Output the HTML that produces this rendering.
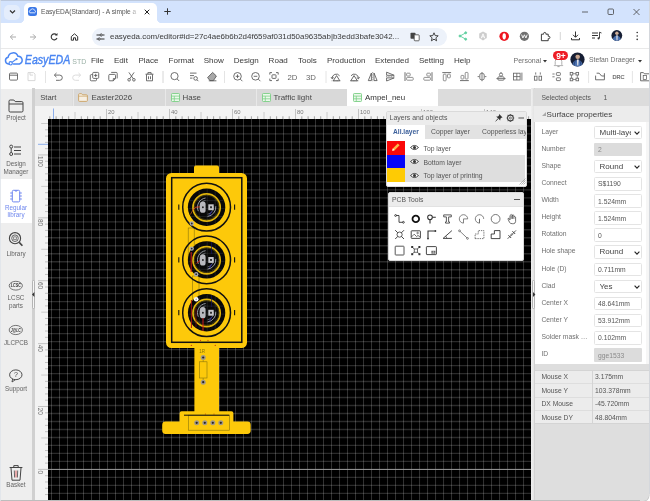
<!DOCTYPE html>
<html><head><meta charset="utf-8"><title>EasyEDA(Standard)</title>
<style>
*{box-sizing:border-box;margin:0;padding:0}
html,body{width:650px;height:501px;overflow:hidden;background:#fff}
body{font-family:"Liberation Sans",Arial,sans-serif;font-size:8px;color:#333;position:relative}
.a{position:absolute}
.t{position:absolute;white-space:nowrap;line-height:1}
#root{position:absolute;left:0;top:0;width:650px;height:501px;will-change:transform}
svg{position:absolute;overflow:visible}
#tabstrip{left:0;top:0;width:650px;height:23px;background:#d3e3fd}
#tab{left:24px;top:3px;width:133px;height:21px;background:#fff;border-radius:5px 5px 0 0}
#toolbar{left:0;top:23px;width:650px;height:26px;background:#fff}
#pill{left:92px;top:27.5px;width:354.500px;height:18.5px;border-radius:9.25px;background:#edf2fa}
#menubar{left:0;top:48.3px;width:650px;height:39.700px;background:#fff;border-top:1px solid #e9e9e9}
#grayrow{left:0;top:88.500px;width:650px;height:18px;background:#dcdcdc}
#sidebar{left:0;top:88.500px;width:32px;height:413px;background:#eeeeee}
#split1{left:32px;top:88px;width:3px;height:413px;background:#d0d0d0}
#rulerT{left:35px;top:106px;width:496px;height:13px;background:#f3f3f3}
#rulerL{left:35px;top:106px;width:13px;height:395px;background:#f3f3f3}
#canvas{left:48px;top:119px;width:483px;height:381px;background:#000}
.mi{top:56.9px;font-size:8.05px;color:#3a3a3a}
.tabx{top:89px;height:17px;font-size:7.95px;color:#484848}
.sbt{left:0;width:32px;text-align:center;font-size:6.3px;color:#606060;white-space:normal;line-height:8px}
</style></head><body>
<div id="root">
<!-- chrome tab strip -->
<div class="a" id="tabstrip"></div>
<div class="a" id="tab"></div>
<div class="a" style="left:157px;top:19px;width:4px;height:4px;background:radial-gradient(circle at 100% 0,#d3e3fd 3.700px,#fff 4.200px)"></div>
<div class="a" style="left:20px;top:19px;width:4px;height:4px;background:radial-gradient(circle at 0 0,#d3e3fd 3.700px,#fff 4.200px)"></div>
<div class="a" id="toolbar"></div>
<div class="a" id="pill"></div>

<!-- CHROME -->
<div class="a" style="left:4px;top:5px;width:16px;height:15px;border-radius:5px;background:#e4edfc"></div>
<svg style="left:9px;top:9px" width="7" height="6" viewBox="0 0 7 6"><path d="M1 1.5 L3.5 4 L6 1.5" fill="none" stroke="#333" stroke-width="1.2"/></svg>
<div class="a" style="left:28px;top:7px;width:9px;height:9px;border-radius:2.5px;background:#3b78e7"></div>
<svg style="left:28px;top:7px" width="9" height="9" viewBox="0 0 9 9"><path d="M2 5.8 a1.4 1.4 0 0 1 .6-2.6 a2 2 0 0 1 3.8 0 a1.4 1.4 0 0 1 .4 2.6 z" fill="none" stroke="#fff" stroke-width=".8"/></svg>
<div class="t" style="left:41px;top:8.6px;font-size:6.6px;color:#555">EasyEDA(Standard) - A simple a</div>
<div class="a" style="left:128px;top:5px;width:12px;height:14px;background:linear-gradient(90deg,rgba(255,255,255,0),#fff)"></div>
<svg style="left:144px;top:8.5px" width="6" height="6" viewBox="0 0 6 6"><path d="M.7 .7 L5.3 5.3 M5.3 .7 L.7 5.3" stroke="#222" stroke-width="1"/></svg>
<svg style="left:164px;top:8px" width="7" height="7" viewBox="0 0 7 7"><path d="M3.5 .3 V6.7 M.3 3.5 H6.7" stroke="#333" stroke-width="1"/></svg>
<!-- window buttons -->
<svg style="left:581px;top:8px" width="60" height="8" viewBox="0 0 60 8"><path d="M1 4 H7" stroke="#444" stroke-width=".8"/><rect x="27" y="1" width="5.5" height="5.5" rx="1" fill="none" stroke="#444" stroke-width=".8"/><path d="M52.5 1 L58.5 7 M58.5 1 L52.5 7" stroke="#444" stroke-width=".8"/></svg>
<!-- nav icons -->
<svg style="left:8px;top:31.6px" width="80" height="10" viewBox="0 0 80 10">
<path d="M8 5 H2.5 M5 2.3 L2.3 5 L5 7.7" fill="none" stroke="#aaa" stroke-width="1"/>
<path d="M22 5 H27.5 M25 2.3 L27.7 5 L25 7.7" fill="none" stroke="#aaa" stroke-width="1"/>
<path d="M48.6 3 A3 3 0 1 0 49 6" fill="none" stroke="#333" stroke-width="1.1"/><path d="M49.5 1 V3.6 H46.9 z" fill="#333"/>
<path d="M63.3 8.2 V4.6 L66.5 1.8 L69.7 4.6 V8.2 H67.5 V5.8 H65.5 V8.2 Z" fill="none" stroke="#333" stroke-width="1"/>
</svg>
<svg style="left:96px;top:32.8px" width="9" height="8" viewBox="0 0 9 8"><path d="M.5 2 H4 M6.5 2 H8.5 M.5 6 H2 M4.5 6 H8.5" stroke="#333" stroke-width="1"/><circle cx="5.2" cy="2" r="1.1" fill="none" stroke="#333" stroke-width=".9"/><circle cx="3.2" cy="6" r="1.1" fill="none" stroke="#333" stroke-width=".9"/></svg>
<div class="t" style="left:110px;top:32.6px;font-size:7.95px;color:#3a3a3a">easyeda.com/editor#id=27c4ae6b6b2d4f659af031d50a9635ab|b3edd3bafe3042...</div>
<!-- translate + star -->
<svg style="left:410px;top:31.8px" width="32" height="10" viewBox="0 0 32 10"><rect x=".5" y=".8" width="5" height="6" rx=".8" fill="#444"/><rect x="4.2" y="2.8" width="5" height="6" rx=".8" fill="#fff" stroke="#444" stroke-width=".8"/><path d="M24 .8 L25.2 3.6 L28.2 3.8 L25.9 5.8 L26.6 8.8 L24 7.2 L21.4 8.8 L22.1 5.8 L19.8 3.8 L22.8 3.6 Z" fill="none" stroke="#333" stroke-width=".9"/></svg>
<!-- extension icons -->
<svg style="left:455px;top:29px" width="190" height="14" viewBox="0 0 190 14">
<g stroke="#5fcf9f" stroke-width=".9" fill="#5fcf9f"><path d="M5 7 L10.5 4 M5 7 L10.5 10" fill="none"/><circle cx="5" cy="7" r="1"/><circle cx="10.7" cy="3.8" r="1"/><circle cx="10.7" cy="10.2" r="1"/></g>
<path d="M28 2.600 L31.800 4.600 V9 L28 11.400 L24.200 9 V4.600 Z" fill="#cdcdcd"/><path d="M26.200 9.300 L28 4.800 L29.800 9.300 M26.900 7.800 H29.100" stroke="#fff" fill="none" stroke-width=".9"/>
<ellipse cx="49.200" cy="7.300" rx="4.800" ry="4.600" fill="#ee1620"/><ellipse cx="49.200" cy="7.300" rx="1.700" ry="3.100" fill="#fff"/>
<circle cx="69.400" cy="7.300" r="4.600" fill="#707070"/><path d="M66.600 5.600 L67.900 9 L69.400 5.800 L70.900 9 L72.200 5.600" fill="none" stroke="#fff" stroke-width=".9"/>
<path d="M86.400 5.200 H88.600 V4.600 A1.150 1.150 0 0 1 90.900 4.600 V5.200 H93.200 V7.300 H93.800 A1.150 1.150 0 0 1 93.800 9.600 H93.200 V11.700 H86.400 Z" fill="none" stroke="#333" stroke-width=".95" stroke-linejoin="round"/>
<path d="M105.3 3 V11" stroke="#ccc" stroke-width=".8"/>
<path d="M120.5 2.5 V8 M118 5.8 L120.5 8.3 L123 5.8 M116.5 9 V10.8 H124.5 V9" fill="none" stroke="#333" stroke-width="1"/>
<path d="M137 4 H143 M137 6.5 H143 M137 9 H140" stroke="#333" stroke-width="1"/><path d="M144.5 3.2 V9 M144.5 3.2 L146.5 4" stroke="#333" stroke-width=".9" fill="none"/><circle cx="143.6" cy="9.3" r="1.1" fill="#333"/>
<defs><clipPath id="av2"><circle cx="161.800" cy="6.500" r="5.400"/></clipPath></defs><circle cx="161.800" cy="6.500" r="5.400" fill="#161e34"/><g clip-path="url(#av2)"><path d="M157.600 12 Q158 6.800 161.800 6.600 Q165.600 6.800 166 12 Z" fill="#4a70ae"/><circle cx="161.900" cy="4.300" r="1.700" fill="#cfae98"/><path d="M161.300 6.200 H162.700 L162.500 11.500 H161.500 Z" fill="#e6e2e4"/></g>
<circle cx="182.200" cy="3.500" r=".8" fill="#333"/><circle cx="182.200" cy="7" r=".8" fill="#333"/><circle cx="182.200" cy="10.400" r=".8" fill="#333"/>
</svg>
<div class="a" id="menubar"></div>

<!-- MENU -->
<svg style="left:4px;top:51px" width="84" height="17" viewBox="0 0 84 17">
<g transform="translate(-0.6,-0.9) scale(1.1)"><path d="M5.2 12.6 H4.6 A3.1 3.1 0 0 1 4.3 6.5 A4.6 4.6 0 0 1 13.2 5.6 A3.6 3.6 0 0 1 14.6 12.6 H9.2" fill="none" stroke="#4a86f2" stroke-width="1.35" stroke-linecap="round"/>
<circle cx="6.6" cy="12" r="1.5" fill="none" stroke="#4a86f2" stroke-width="1"/><path d="M7.8 11.2 L11.3 8.6" stroke="#4a86f2" stroke-width="1"/><circle cx="12" cy="8.2" r="1" fill="#4a86f2"/></g>
<text x="20.8" y="13.200" font-family="Liberation Sans,Arial,sans-serif" font-style="italic" font-size="12.2" fill="#4a86f2" stroke="#4a86f2" stroke-width=".4" textLength="45.500" lengthAdjust="spacingAndGlyphs">EasyEDA</text>
<text x="68.3" y="12.500" font-family="Liberation Sans,Arial,sans-serif" font-size="6.5" fill="#9ab0a6" textLength="14" lengthAdjust="spacingAndGlyphs">STD</text>
</svg>
<div class="t mi" style="left:91px;width:13.0px">File</div>
<div class="t mi" style="left:114px;width:14.0px">Edit</div>
<div class="t mi" style="left:138.4px;width:19.4px">Place</div>
<div class="t mi" style="left:168.5px;width:25.2px">Format</div>
<div class="t mi" style="left:203.7px;width:20.3px">Show</div>
<div class="t mi" style="left:233.7px;width:25.3px">Design</div>
<div class="t mi" style="left:268.6px;width:19.0px">Road</div>
<div class="t mi" style="left:298px;width:19.0px">Tools</div>
<div class="t mi" style="left:327px;width:38.0px">Production</div>
<div class="t mi" style="left:375px;width:34.0px">Extended</div>
<div class="t mi" style="left:419px;width:25.0px">Setting</div>
<div class="t mi" style="left:454px;width:16.0px">Help</div>
<div class="t" style="left:513.5px;top:56.7px;font-size:7px;color:#6e6e6e">Personal</div>
<svg style="left:543.300px;top:59.6px" width="4" height="2.400" viewBox="0 0 5 3"><path d="M0 0 H5 L2.5 3 Z" fill="#333"/></svg>
<svg style="left:553px;top:55.6px" width="11" height="12" viewBox="0 0 11 12"><path d="M2.2 8.5 V5.5 A3.3 3.3 0 0 1 8.8 5.5 V8.5 L9.8 9.6 H1.2 Z" fill="none" stroke="#a8a8a8" stroke-width=".9"/><path d="M4.4 10.6 H6.6" stroke="#999" stroke-width=".9"/></svg>
<div class="a" style="left:552.5px;top:51.3px;width:15px;height:9px;border-radius:4.5px;background:#ee1c25"></div>
<div class="t" style="left:556.2px;top:51.7px;font-size:8.4px;font-weight:bold;color:#fff">9+</div>
<svg style="left:570px;top:51.6px" width="15" height="15" viewBox="0 0 15 15"><defs><clipPath id="av"><circle cx="7.5" cy="7.5" r="7"/></clipPath></defs><circle cx="7.5" cy="7.5" r="7.100" fill="#161e34"/><g clip-path="url(#av)"><path d="M2 15 Q2.400 8.200 7.500 8 Q12.600 8.200 13 15 Z" fill="#4a70ae"/><path d="M5.200 8.600 L3.600 14 M9.800 8.600 L11.400 14" stroke="#2d4a80" stroke-width="1.200"/><circle cx="7.700" cy="4.700" r="2.300" fill="#c8a690"/><path d="M5.500 3.800 Q7.700 1.200 9.900 3.800 L9.700 2.600 Q7.700 .8 5.700 2.600 Z" fill="#2a2a2a"/><path d="M6.900 7.400 H8.700 L8.300 13.500 H7.300 Z" fill="#e4e4ea"/></g></svg>
<div class="t" style="left:589px;top:56.7px;font-size:6.8px;color:#6e6e6e">Stefan Draeger</div>
<svg style="left:638.300px;top:59.6px" width="4" height="2.400" viewBox="0 0 5 3"><path d="M0 0 H5 L2.5 3 Z" fill="#333"/></svg>
<svg style="left:0;top:67.6px" width="650" height="19" viewBox="0 0 650 19">
<g transform="translate(13.5,8.6)" fill="none" stroke="#555" stroke-width=".85"><rect x="-4" y="-3.5" width="8" height="7" rx="1"/><path d="M-4 -1.4 H4"/></g>
<g transform="translate(31.5,8.6)" fill="none" stroke="#d4d4d4" stroke-width=".9"><path d="M-3.5 -4 H2 L3.5 -2.5 V4 H-3.5 Z"/><path d="M-1.5 -4 V-1.5 H1.5"/></g>
<path d="M45.5 3 V15" stroke="#ddd" stroke-width=".8"/><g transform="translate(58.5,8.6)" fill="none" stroke="#555" stroke-width=".85"><path d="M-3.8 -1.5 H1.2 A2.6 2.6 0 0 1 1.2 3.7 H-2.5"/><path d="M-2 -3.6 L-4.2 -1.5 L-2 .6"/></g>
<g transform="translate(76.5,8.6)" fill="none" stroke="#d8d8d8" stroke-width=".9"><path d="M3.8 -1.5 H-1.2 A2.6 2.6 0 0 0 -1.2 3.7 H2.5"/><path d="M2 -3.6 L4.2 -1.5 L2 .6"/></g>
<g transform="translate(94.5,8.6)" fill="none" stroke="#555" stroke-width=".85"><rect x="-1.8" y="-4.2" width="6" height="6" rx="1"/><path d="M-2 -2 H-3.2 A1 1 0 0 0 -4.2 -1 V3.2 A1 1 0 0 0 -3.2 4.2 H1 A1 1 0 0 0 2 3.2 V2"/><path d="M1.2 -2.8 V.4 M-.4 -1.2 H2.8"/></g>
<g transform="translate(113,8.6)" fill="none" stroke="#555" stroke-width=".85"><path d="M-1.8 -4.2 H3.2 A1 1 0 0 1 4.2 -3.2 V1.8"/><path d="M-4.2 -1.2 A1 1 0 0 1 -3.2 -2.2 H1.5 A1 1 0 0 1 2.5 -1.2 V2 L.3 4.2 H-3.2 A1 1 0 0 1 -4.2 3.2 Z"/><path d="M2.4 2 H.3 V4.2" /></g>
<g transform="translate(131.5,8.6)" fill="none" stroke="#555" stroke-width=".85"><path d="M-2.6 -4.2 L1.8 2.2 M2.6 -4.2 L-1.8 2.2"/><circle cx="-2.4" cy="3.2" r="1.3"/><circle cx="2.4" cy="3.2" r="1.3"/></g>
<g transform="translate(149.5,8.6)" fill="none" stroke="#555" stroke-width=".85"><path d="M-4 -2.4 H4 M-1.6 -2.4 V-4 H1.6 V-2.4"/><path d="M-3 -2.2 V4.2 H3 V-2.2"/><path d="M-1 -.3 V2.6 M1 -.3 V2.6"/></g>
<path d="M163 3 V15" stroke="#ccc" stroke-width=".8"/><g transform="translate(175,8.6)" fill="none" stroke="#555" stroke-width=".85"><circle cx="-.5" cy="-.5" r="3.6"/><path d="M2.2 2.4 L4.2 4.4"/></g>
<g transform="translate(194,8.6)" fill="none" stroke="#555" stroke-width=".85"><path d="M-4 -3.5 H2.5 M-4 -1 H0 M-4 1.5 H-1.5"/><circle cx="1.6" cy="1.8" r="1.8"/><path d="M3 3.2 L4.4 4.6"/></g>
<g transform="translate(212,8.6)" fill="none" stroke="#555" stroke-width=".85"><path d="M-4.4 1 L.6 -4.2 L4.4 -.6 L1.4 4 H-2 Z" fill="#a8a8a8"/><path d="M-3.2 4.2 H4.4"/></g>
<path d="M224.5 3 V15" stroke="#ddd" stroke-width=".8"/><g transform="translate(238,8.6)" fill="none" stroke="#555" stroke-width=".85"><circle cx="-.5" cy="-.3" r="3.8"/><path d="M2.4 2.6 L4.4 4.6 M-2.3 -.3 H1.3 M-.5 -2.1 V1.5"/></g>
<g transform="translate(256,8.6)" fill="none" stroke="#555" stroke-width=".85"><circle cx="-.5" cy="-.3" r="3.8"/><path d="M2.4 2.6 L4.4 4.6 M-2.3 -.3 H1.3"/></g>
<g transform="translate(274,8.6)" fill="none" stroke="#555" stroke-width=".85"><path d="M-4.2 -2 V-4 H-2 M2 -4 H4.2 V-2 M4.2 2 V4 H2 M-2 4 H-4.2 V2"/><rect x="-2" y="-1.8" width="4" height="3.6" rx=".6"/></g>
<text x="287.5" y="11.6" font-family="Liberation Sans,Arial,sans-serif" font-size="7.8" fill="#666">2D</text><text x="306" y="11.6" font-family="Liberation Sans,Arial,sans-serif" font-size="7.8" fill="#666">3D</text><path d="M326 3 V15" stroke="#ddd" stroke-width=".8"/><g transform="translate(336,8.6)" fill="none" stroke="#555" stroke-width=".85"><path d="M-2.800 4.200 L.6 -1 L3.800 4.200 Z" stroke-width=".9"/><path d="M-3.800 2 A4.100 4.100 0 0 1 3.600 -.8" stroke-width=".85"/><path d="M-5 .4 L-3.800 2.300 L-2.200 .9" stroke-width=".8"/><path d="M-4.400 4.200H4.400" stroke-width=".6" stroke-dasharray=".8 .6"/></g>
<g transform="translate(354.6,8.6)" fill="none" stroke="#555" stroke-width=".85"><path d="M2.800 4.200 L-.6 -1 L-3.800 4.200 Z" stroke-width=".9"/><path d="M3.800 2 A4.100 4.100 0 0 0 -3.600 -.8" stroke-width=".85"/><path d="M5 .4 L3.800 2.300 L2.200 .9" stroke-width=".8"/><path d="M-4.400 4.200H4.400" stroke-width=".6" stroke-dasharray=".8 .6"/></g>
<g transform="translate(372.7,8.6)" fill="none" stroke="#555" stroke-width=".85"><path d="M0 -4.600 V4.600" stroke-width=".6" stroke-dasharray="1 .7"/><path d="M-1.300 -3.600 V4 H-4.400 Z M1.300 -3.600 V4 H4.400 Z" stroke-width=".85"/></g>
<g transform="translate(390.4,8.6)" fill="none" stroke="#555" stroke-width=".85"><path d="M-4.400 0 H4.600" stroke-width=".6" stroke-dasharray="1 .7"/><path d="M-3.800 -1.300 H3.800 L-3.800 -4.400 Z M-3.800 1.300 H3.800 L-3.800 4.400 Z" stroke-width=".85"/></g>
<g transform="translate(409,8.6)" fill="none" stroke="#555" stroke-width=".85"><path d="M-4 -4.4 V4.4"/><rect stroke="#808080" rx=".7" x="-2.4" y="-3.4" width="3.6" height="2.8"/><rect stroke="#808080" rx=".7" x="-2.4" y=".8" width="6.6" height="2.8"/></g>
<g transform="translate(428,8.6)" fill="none" stroke="#555" stroke-width=".85"><path d="M4 -4.4 V4.4"/><rect stroke="#808080" rx=".7" x="-1.2" y="-3.4" width="3.6" height="2.8"/><rect stroke="#808080" rx=".7" x="-4.2" y=".8" width="6.6" height="2.8"/></g>
<g transform="translate(446.7,8.6)" fill="none" stroke="#555" stroke-width=".85"><path d="M-4.4 -4 H4.4"/><rect stroke="#808080" rx=".7" x="-3.4" y="-2.4" width="2.8" height="6.6"/><rect stroke="#808080" rx=".7" x=".8" y="-2.4" width="2.8" height="3.6"/></g>
<g transform="translate(464.4,8.6)" fill="none" stroke="#555" stroke-width=".85"><path d="M-4.4 4 H4.4"/><rect stroke="#808080" rx=".7" x="-3.4" y="-1.2" width="2.8" height="3.6"/><rect stroke="#808080" rx=".7" x=".8" y="-4.2" width="2.8" height="6.6"/></g>
<g transform="translate(482,8.6)" fill="none" stroke="#666" stroke-width=".85"><path d="M0 -4.6 V4.6 M-4.4 0 H-2.6 M2.6 0 H4.4"/><rect x="-2.2" y="-3.2" width="4.4" height="6.4" rx="1.6"/></g>
<g transform="translate(501,8.6)" fill="none" stroke="#666" stroke-width=".85"><path d="M-4.6 2 H4.6 M0 -4.4 V-3 "/><rect x="-3.2" y=".2" width="6.4" height="3.4" rx="1.2"/><circle cx="0" cy="-2" r="1.6"/></g>
<g transform="translate(517.7,8.6)" fill="none" stroke="#666" stroke-width=".85"><rect x="-4.2" y="-3.4" width="6.6" height="6.8"/><path d="M-4.2 0 H2.4 M-.9 -3.4 V3.4 M4.2 -4 V4"/></g>
<g transform="translate(538,8.6)" fill="none" stroke="#666" stroke-width=".85"><rect x="-3.6" y="-.4" width="2.6" height="4"/><rect x="1" y="-.4" width="2.6" height="4"/><path d="M-2.3 -4.2 V-2 M2.3 -4.2 V-2"/></g>
<g transform="translate(556.6,8.6)" fill="none" stroke="#666" stroke-width=".85"><rect x="-.2" y="-4" width="4" height="2.8" rx=".6"/><rect x="-.2" y="1.2" width="4" height="2.8" rx=".6"/><path d="M-4.2 -2.6 H-2 M-4.2 .2 H-2"/></g>
<g transform="translate(574.4,8.6)" fill="none" stroke="#666" stroke-width=".85"><rect x="-4.2" y="-4.2" width="2.6" height="2.6"/><rect x="1.6" y="-4.2" width="2.6" height="2.6"/><rect x="-4.2" y="1.6" width="2.6" height="2.6"/><rect x="1.6" y="1.6" width="2.6" height="2.6"/><path d="M-1.6 -2.9 H1.6 M-1.6 2.9 H1.6 M-2.9 -1.6 V1.6 M2.9 -1.6 V1.6" stroke-width=".7"/></g>
<path d="M588.6 3 V15" stroke="#ddd" stroke-width=".8"/><g transform="translate(600,8.6)" fill="none" stroke="#555" stroke-width=".85"><path d="M-4.4 -1 V3.2 H4.4 V-3.4 M-3.4 -3.4 H-.8 L1.6 -.6 H4.4"/></g>
<text x="612.4" y="10.8" font-family="Liberation Sans,Arial,sans-serif" font-size="5.8" fill="#666" stroke="#666" stroke-width=".2" textLength="12" lengthAdjust="spacingAndGlyphs">DRC</text><path d="M632.4 3 V15" stroke="#ddd" stroke-width=".8"/><g transform="translate(645,8.6)" fill="none" stroke="#555" stroke-width=".85"><path d="M-4.4 -4 H-1.6 L-.6 -2.8 H5 V4.2 H-4.4 Z"/><rect x="-1.8" y="-1.2" width="3.4" height="4" stroke-width=".7"/></g>
</svg>
<div class="a" id="grayrow"></div>
<div class="a" id="sidebar"></div>
<div class="a" id="split1"></div>
<div class="a" id="rulerT"></div>
<div class="a" id="rulerL"></div>
<div class="a" id="canvas"></div>

<!-- TABS -->
<div class="a" style="left:35px;top:89px;width:37px;height:17px;background:#e0e0e0"></div>
<div class="a" style="left:72.5px;top:89px;width:92px;height:17px;background:#d9d9d9;border-left:1px solid #e8e8e8"></div>
<div class="a" style="left:164.5px;top:89px;width:91px;height:17px;background:#d9d9d9;border-left:1px solid #e8e8e8"></div>
<div class="a" style="left:255.5px;top:89px;width:91px;height:17px;background:#d9d9d9;border-left:1px solid #e8e8e8"></div>
<div class="a" style="left:347px;top:89px;width:91px;height:17px;background:#fff"></div>
<div class="t tabx" style="left:40.2px;top:93.7px;font-size:7.7px">Start</div>
<svg style="left:78px;top:93px" width="10" height="9" viewBox="0 0 10 9"><path d="M.6 1.6 A.9 .9 0 0 1 1.5 .7 H3.6 L4.5 1.8 H8.5 A.9 .9 0 0 1 9.4 2.700 V7.5 A.9 .9 0 0 1 8.5 8.4 H1.5 A.9 .9 0 0 1 .6 7.5 Z" fill="#f7efe2" stroke="#c9a063" stroke-width=".9"/><path d="M.6 3.2H9.400" stroke="#c9a063" stroke-width=".7"/></svg>
<div class="t tabx" style="left:91.5px;top:93.5px">Easter2026</div>
<svg style="left:171px;top:93px" width="9" height="9" viewBox="0 0 9 9"><rect x=".5" y=".5" width="8" height="8" rx=".8" fill="#ecf9ec" stroke="#7ccf86" stroke-width=".9"/><path d="M.5 3.100H8.5 M.5 5.800H8.5 M3.3 3.100V8.5" stroke="#7ccf86" stroke-width=".8"/></svg>
<div class="t tabx" style="left:182.5px;top:93.5px">Hase</div>
<svg style="left:262px;top:93px" width="9" height="9" viewBox="0 0 9 9"><rect x=".5" y=".5" width="8" height="8" rx=".8" fill="#ecf9ec" stroke="#7ccf86" stroke-width=".9"/><path d="M.5 3.100H8.5 M.5 5.800H8.5 M3.3 3.100V8.5" stroke="#7ccf86" stroke-width=".8"/></svg>
<div class="t tabx" style="left:273.5px;top:93.5px">Traffic light</div>
<svg style="left:353px;top:93px" width="9" height="9" viewBox="0 0 9 9"><rect x=".5" y=".5" width="8" height="8" rx=".8" fill="#ecf9ec" stroke="#7ccf86" stroke-width=".9"/><path d="M.5 3.100H8.5 M.5 5.800H8.5 M3.3 3.100V8.5" stroke="#7ccf86" stroke-width=".8"/></svg>
<div class="t tabx" style="left:365px;top:93.5px;color:#333">Ampel_neu</div>
<!-- SIDEBAR -->
<div class="a" style="left:32px;top:280.300px;width:3.200px;height:29px;background:#f6f6f6;border:.6px solid #b4b4b4;border-radius:1.200px;z-index:3"></div>
<svg style="left:32.4px;top:292px;z-index:4" width="2.400" height="5" viewBox="0 0 2.400 5"><path d="M2.400 0L0 2.500L2.400 5Z" fill="#333"/></svg>
<div class="a" style="left:0;top:178.800px;width:31.500px;height:44.400px;background:#fff"></div>
<svg style="left:0;top:88px" width="32" height="413" viewBox="0 88 32 413" fill="none" stroke="#444" stroke-width="1">
<path d="M9 101.200 A1.200 1.200 0 0 1 10.200 100 H13.800 L15.200 101.600 H21.800 A1.200 1.200 0 0 1 23 102.800 V110.800 A1.200 1.200 0 0 1 21.800 112 H10.200 A1.200 1.200 0 0 1 9 110.800 Z M9 104 H23"/>
<path d="M14 147H21 M14 150.500H21 M14 154H21" stroke-width="1.100"/><circle cx="11.200" cy="146.600" r="1.500"/><circle cx="11.200" cy="154" r="1.500"/><path d="M11.200 148.100V152.500"/>
<g stroke="#6f86f0"><rect x="12.300" y="190.300" width="7.400" height="11.600" rx="1.200"/><path d="M10.200 193H12.300 M10.200 196H12.300 M10.200 199H12.300 M19.700 193H21.800 M19.700 196H21.800 M19.700 199H21.800 M15 190.300 A1 1 0 0 0 17 190.300"/></g>
<circle cx="15" cy="238.200" r="5.600" stroke-width="1.100"/><circle cx="15" cy="238.200" r="3.300" stroke-width=".8"/><path d="M19.200 242.400 L22.400 245.800" stroke-width="1.600"/><path d="M13.600 236.800H16.400V239.600H13.600Z" stroke-width=".6"/>
<ellipse cx="15.800" cy="285.700" rx="6.600" ry="4.400" stroke-width=".8" stroke="#555"/>
<ellipse cx="15.800" cy="330" rx="6.600" ry="4.600" stroke-width=".8" stroke="#555"/>
<ellipse cx="15.800" cy="374.800" rx="6.200" ry="4.900" stroke-width=".95"/><path d="M12.600 379 L12 382 L15.400 379.700" stroke-width=".9"/>
<path d="M9.600 467.500H22.400 M13.800 467.300 V465.600 H18.200 V467.300 M11 468 L12 480.200 H20 L21 468" /><path d="M14.300 470.500 L14.600 477.500 M17.700 470.500 L17.400 477.500" stroke-width=".8"/><path d="M16 470.500V477.500" stroke="#d44" stroke-width=".8"/>
</svg>
<svg style="left:0;top:280px" width="32" height="56" viewBox="0 280 32 56" font-family="Liberation Sans,Arial,sans-serif" font-weight="bold" font-style="italic" fill="#333"><text x="15.800" y="287.300" font-size="4.500" text-anchor="middle" textLength="10" lengthAdjust="spacingAndGlyphs">LCSC</text><text x="15.800" y="331.600" font-size="4.500" text-anchor="middle" textLength="10" lengthAdjust="spacingAndGlyphs">J@LC</text></svg>
<div class="t" style="left:14px;top:371.300px;font-size:7px;color:#444">?</div>
<div class="t sbt" style="top:114.2px;color:#636363">Project</div>
<div class="t sbt" style="top:160px;color:#636363">Design<br>Manager</div>
<div class="t sbt" style="top:204px;color:#7088ee;line-height:7.200px">Regular<br>library</div>
<div class="t sbt" style="top:249.9px;color:#636363">Library</div>
<div class="t sbt" style="top:294px;color:#636363">LCSC<br>parts</div>
<div class="t sbt" style="top:339px;color:#636363">JLCPCB</div>
<div class="t sbt" style="top:384.6px;color:#636363">Support</div>
<div class="t sbt" style="top:481px;color:#636363">Basket</div>
<svg id="rulers" style="left:0;top:0" width="650" height="501" viewBox="0 0 650 501" font-family="Liberation Sans,Arial,sans-serif">
<text x="108.1" y="114" font-size="5.9" fill="#7a7a7a">20</text>
<text x="171.1" y="114" font-size="5.9" fill="#7a7a7a">40</text>
<text x="234.1" y="114" font-size="5.9" fill="#7a7a7a">60</text>
<text x="297.1" y="114" font-size="5.9" fill="#7a7a7a">80</text>
<text x="360.1" y="114" font-size="5.9" fill="#7a7a7a">100</text>
<text x="423.1" y="114" font-size="5.9" fill="#7a7a7a">120</text>
<text x="486.1" y="114" font-size="5.9" fill="#7a7a7a">140</text>
<path d="M49.80 116.3V119M56.10 116.3V119M62.40 116.3V119M68.70 116.3V119M81.30 116.3V119M87.60 116.3V119M93.90 116.3V119M100.20 116.3V119M112.80 116.3V119M119.10 116.3V119M125.40 116.3V119M131.70 116.3V119M144.30 116.3V119M150.60 116.3V119M156.90 116.3V119M163.20 116.3V119M175.80 116.3V119M182.10 116.3V119M188.40 116.3V119M194.70 116.3V119M207.30 116.3V119M213.60 116.3V119M219.90 116.3V119M226.20 116.3V119M238.80 116.3V119M245.10 116.3V119M251.40 116.3V119M257.70 116.3V119M270.30 116.3V119M276.60 116.3V119M282.90 116.3V119M289.20 116.3V119M301.80 116.3V119M308.10 116.3V119M314.40 116.3V119M320.70 116.3V119M333.30 116.3V119M339.60 116.3V119M345.90 116.3V119M352.20 116.3V119M364.80 116.3V119M371.10 116.3V119M377.40 116.3V119M383.70 116.3V119M396.30 116.3V119M402.60 116.3V119M408.90 116.3V119M415.20 116.3V119M427.80 116.3V119M434.10 116.3V119M440.40 116.3V119M446.70 116.3V119M459.30 116.3V119M465.60 116.3V119M471.90 116.3V119M478.20 116.3V119M490.80 116.3V119M497.10 116.3V119M503.40 116.3V119M509.70 116.3V119M522.30 116.3V119M528.60 116.3V119" stroke="#8c8c8c" stroke-width=".8"/><path d="M75.00 112V119M138.00 112V119M201.00 112V119M264.00 112V119M327.00 112V119M390.00 112V119M453.00 112V119M516.00 112V119" stroke="#c6c6c6" stroke-width=".9"/><path d="M106.50 109V119M169.50 109V119M232.50 109V119M295.50 109V119M358.50 109V119M421.50 109V119M484.50 109V119" stroke="#bdbdbd" stroke-width=".9"/>
<text transform="translate(38.4,470.6) rotate(90)" font-size="6.4" fill="#707070">0</text>
<text transform="translate(38.4,407.7) rotate(90)" font-size="6.4" fill="#707070">20</text>
<text transform="translate(38.4,344.8) rotate(90)" font-size="6.4" fill="#707070">40</text>
<text transform="translate(38.4,281.9) rotate(90)" font-size="6.4" fill="#707070">60</text>
<text transform="translate(38.4,219.0) rotate(90)" font-size="6.4" fill="#707070">80</text>
<text transform="translate(38.4,156.1) rotate(90)" font-size="6.4" fill="#707070">100</text>
<path d="M45 494.56H48M45 488.27H48M45 481.98H48M45 475.69H48M45 463.11H48M45 456.82H48M45 450.53H48M45 444.24H48M45 431.67H48M45 425.38H48M45 419.09H48M45 412.80H48M45 400.22H48M45 393.93H48M45 387.64H48M45 381.35H48M45 368.78H48M45 362.49H48M45 356.20H48M45 349.91H48M45 337.33H48M45 331.04H48M45 324.75H48M45 318.46H48M45 305.89H48M45 299.60H48M45 293.31H48M45 287.02H48M45 274.44H48M45 268.15H48M45 261.86H48M45 255.57H48M45 243.00H48M45 236.71H48M45 230.42H48M45 224.13H48M45 211.55H48M45 205.26H48M45 198.97H48M45 192.68H48M45 180.11H48M45 173.82H48M45 167.53H48M45 161.24H48M45 148.66H48M45 142.37H48M45 136.08H48M45 129.79H48" stroke="#b4b4b4" stroke-width=".8"/><path d="M41.2 437.95H48M41.2 375.06H48M41.2 312.17H48M41.2 249.28H48M41.2 186.39H48M41.2 123.50H48" stroke="#c6c6c6" stroke-width=".9"/><path d="M38 469.40H48M38 406.51H48M38 343.62H48M38 280.73H48M38 217.84H48M38 154.95H48" stroke="#bdbdbd" stroke-width=".9"/>
<path d="M53.5 108.5V119 M38 144.3H48" stroke="#7aa2ea" stroke-width=".85"/>
</svg>
<svg id="cv" style="left:48px;top:119px;overflow:hidden" width="483" height="381" viewBox="48 119 483 381" font-family="Liberation Sans,Arial,sans-serif">
<path id="gv" d="M51.50 119V500M59.50 119V500M67.50 119V500M75.50 119V500M83.50 119V500M91.51 119V500M99.51 119V500M107.51 119V500M115.51 119V500M123.51 119V500M131.51 119V500M139.51 119V500M147.51 119V500M155.51 119V500M163.51 119V500M171.52 119V500M179.52 119V500M187.52 119V500M195.52 119V500M203.52 119V500M211.52 119V500M219.52 119V500M227.52 119V500M235.52 119V500M243.52 119V500M251.53 119V500M259.53 119V500M267.53 119V500M275.53 119V500M283.53 119V500M291.53 119V500M299.53 119V500M307.53 119V500M315.53 119V500M323.53 119V500M331.54 119V500M339.54 119V500M347.54 119V500M355.54 119V500M363.54 119V500M371.54 119V500M379.54 119V500M387.54 119V500M395.54 119V500M403.54 119V500M411.55 119V500M419.55 119V500M427.55 119V500M435.55 119V500M443.55 119V500M451.55 119V500M459.55 119V500M467.55 119V500M475.55 119V500M483.55 119V500M491.56 119V500M499.56 119V500M507.56 119V500M515.56 119V500M523.56 119V500" stroke="#fff" stroke-opacity=".21" stroke-width=".95"/>
<path id="gh" d="M48 493.36H531M48 485.37H531M48 477.39H531M48 461.41H531M48 453.43H531M48 445.44H531M48 437.45H531M48 429.46H531M48 421.48H531M48 413.49H531M48 405.50H531M48 397.52H531M48 389.53H531M48 381.54H531M48 373.56H531M48 365.57H531M48 357.58H531M48 349.59H531M48 341.61H531M48 333.62H531M48 325.63H531M48 317.65H531M48 309.66H531M48 301.67H531M48 293.69H531M48 285.70H531M48 277.71H531M48 269.72H531M48 261.74H531M48 253.75H531M48 245.76H531M48 237.78H531M48 229.79H531M48 221.80H531M48 213.82H531M48 205.83H531M48 197.84H531M48 189.85H531M48 181.87H531M48 173.88H531M48 165.89H531M48 157.91H531M48 149.92H531M48 141.93H531M48 133.94H531M48 125.96H531" stroke="#fff" stroke-opacity=".17" stroke-width="1.35"/>
<path id="go" d="M48 469.4H531" stroke="#a0a0a0" stroke-width="1"/>
<path d="M196 165.4H217A2 2 0 0 1 219 167.4V173H241.5A5.5 5.5 0 0 1 247 178.500V342.5A5.500 5.500 0 0 1 241.5 348H219V411.2H231.400A2 2 0 0 1 233.4 413.200V421.600H247.300A3.400 3.400 0 0 1 250.7 425V430.500A3.400 3.400 0 0 1 247.300 433.900H165.600A3.400 3.400 0 0 1 162.200 430.500V425A3.400 3.400 0 0 1 165.600 421.600H179.600V413.200A2 2 0 0 1 181.600 411.200H194.400V348H171.500A5.500 5.500 0 0 1 166 342.500V178.500A5.500 5.500 0 0 1 171.500 173H194V167.400A2 2 0 0 1 196 165.400Z" fill="#fdc90a"/>
<rect x="171.7" y="177.700" width="70.100" height="164.600" fill="none" stroke="#111" stroke-width="1.5"/>
<g fill="none" stroke="#8a760c" stroke-width=".6"><rect x="188.2" y="228" width="6" height="36"/><rect x="192.6" y="276" width="6.4" height="24"/><rect x="199.6" y="361.8" width="7.4" height="16.2"/><path d="M203.200 360V361.800 M203.200 378V380"/><rect x="188.4" y="415.2" width="40.9" height="15"/></g>
<circle cx="206.6" cy="207.2" r="23.9" fill="none" stroke="#111" stroke-width="1.5"/><circle cx="206.6" cy="207.2" r="18.7" fill="#080808"/><path d="M199.2 191.2V223.2 M207.2 189.2V225.2 M215.2 191.2V223.2 M189.6 200.6H223.6 M188.6 208.6H224.6 M190.6 216.6H222.6" stroke="#fff" stroke-opacity=".1" stroke-width=".9"/><circle cx="206.6" cy="207.5" r="13.6" fill="none" stroke="#e0b50c" stroke-width="1.7"/><circle cx="206.6" cy="207.5" r="12.3" fill="none" stroke="#6b5a10" stroke-width=".6"/><path d="M198.3 211.2 A9.4 9.4 0 0 1 205.6 198.0" fill="none" stroke="#a4a8b0" stroke-width=".9"/><path d="M215.8 206.2 A9.4 9.4 0 0 1 207.6 216.4" fill="none" stroke="#a4a8b0" stroke-width=".9"/><path d="M213.6 206.2 A7 7 0 0 1 207.6 214.2" fill="none" stroke="#7d828a" stroke-width=".7"/><path d="M200.4 210.2 A6.8 6.8 0 0 1 205.6 200.4" fill="none" stroke="#7d828a" stroke-width=".7"/><path d="M211.7 211.2L209.6 215.2" stroke="#2a2a9a" stroke-width="1"/><rect x="200.0" y="201.6" width="5.6" height="11.2" rx="2.6" fill="#b9b9be"/><ellipse cx="202.9" cy="207.3" rx=".9" ry="1" fill="#1c1c1c"/><rect x="208.3" y="204.3" width="5.4" height="5.9" fill="#c4c4c8"/><rect x="210.1" y="206.3" width="1.8" height="1.9" fill="#222"/><path d="M178.8 204.6V209.8 M234.6 204.6V209.8" stroke="#111" stroke-width="1.1"/>
<circle cx="206.6" cy="259.9" r="23.9" fill="none" stroke="#111" stroke-width="1.5"/><circle cx="206.6" cy="259.9" r="18.7" fill="#080808"/><path d="M199.2 243.89999999999998V275.9 M207.2 241.89999999999998V277.9 M215.2 243.89999999999998V275.9 M189.6 253.3H223.6 M188.6 261.3H224.6 M190.6 269.3H222.6" stroke="#fff" stroke-opacity=".1" stroke-width=".9"/><circle cx="206.6" cy="260.2" r="13.6" fill="none" stroke="#e0b50c" stroke-width="1.7"/><circle cx="206.6" cy="260.2" r="12.3" fill="none" stroke="#6b5a10" stroke-width=".6"/><path d="M198.3 263.9 A9.4 9.4 0 0 1 205.6 250.7" fill="none" stroke="#a4a8b0" stroke-width=".9"/><path d="M215.8 258.9 A9.4 9.4 0 0 1 207.6 269.1" fill="none" stroke="#a4a8b0" stroke-width=".9"/><path d="M213.6 258.9 A7 7 0 0 1 207.6 266.9" fill="none" stroke="#7d828a" stroke-width=".7"/><path d="M200.4 262.9 A6.8 6.8 0 0 1 205.6 253.1" fill="none" stroke="#7d828a" stroke-width=".7"/><path d="M211.7 263.9L209.6 267.9" stroke="#2a2a9a" stroke-width="1"/><rect x="200.0" y="254.3" width="5.6" height="11.2" rx="2.6" fill="#b9b9be"/><ellipse cx="202.9" cy="260.0" rx=".9" ry="1" fill="#1c1c1c"/><rect x="208.3" y="257.0" width="5.4" height="5.9" fill="#c4c4c8"/><rect x="210.1" y="259.0" width="1.8" height="1.9" fill="#222"/><path d="M178.8 257.3V262.5 M234.6 257.3V262.5" stroke="#111" stroke-width="1.1"/>
<circle cx="206.6" cy="312.7" r="23.9" fill="none" stroke="#111" stroke-width="1.5"/><circle cx="206.6" cy="312.7" r="18.7" fill="#080808"/><path d="M199.2 296.7V328.7 M207.2 294.7V330.7 M215.2 296.7V328.7 M189.6 306.1H223.6 M188.6 314.1H224.6 M190.6 322.1H222.6" stroke="#fff" stroke-opacity=".1" stroke-width=".9"/><circle cx="206.6" cy="313.0" r="13.6" fill="none" stroke="#e0b50c" stroke-width="1.7"/><circle cx="206.6" cy="313.0" r="12.3" fill="none" stroke="#6b5a10" stroke-width=".6"/><path d="M198.3 316.7 A9.4 9.4 0 0 1 205.6 303.5" fill="none" stroke="#a4a8b0" stroke-width=".9"/><path d="M215.8 311.7 A9.4 9.4 0 0 1 207.6 321.9" fill="none" stroke="#a4a8b0" stroke-width=".9"/><path d="M213.6 311.7 A7 7 0 0 1 207.6 319.7" fill="none" stroke="#7d828a" stroke-width=".7"/><path d="M200.4 315.7 A6.8 6.8 0 0 1 205.6 305.9" fill="none" stroke="#7d828a" stroke-width=".7"/><path d="M211.7 316.7L209.6 320.7" stroke="#2a2a9a" stroke-width="1"/><rect x="200.0" y="307.1" width="5.6" height="11.2" rx="2.6" fill="#b9b9be"/><ellipse cx="202.9" cy="312.8" rx=".9" ry="1" fill="#1c1c1c"/><rect x="208.3" y="309.8" width="5.4" height="5.9" fill="#c4c4c8"/><rect x="210.1" y="311.8" width="1.8" height="1.9" fill="#222"/><path d="M178.8 310.1V315.3 M234.6 310.1V315.3" stroke="#111" stroke-width="1.1"/>
<g fill="none" stroke-width=".9"><path d="M200 206.900 L195.500 207.200 L192.800 210.200" stroke="#e04428"/><path d="M192.800 210.200 L190.400 214.500" stroke="#e06a20" stroke-opacity=".7"/><path d="M191.2 252V272" stroke="#c01818" stroke-width="1.1"/><path d="M200 260.500 L196.500 263.400" stroke="#e02020"/><path d="M191.4 300V328" stroke="#a01414" stroke-width="1"/><path d="M203 318V331" stroke="#d01c1c" stroke-width="1"/><path d="M196 308V327" stroke="#7a1010" stroke-width=".8"/><path d="M211.500 242V254 M211.500 295V307" stroke="#14145e" stroke-width=".7"/></g>
<g fill="#d24a10"><circle cx="191.4" cy="345.4" r=".7"/><circle cx="215.300" cy="345.400" r=".7"/><circle cx="200.500" cy="340.400" r=".6"/><circle cx="208" cy="340.400" r=".6"/><circle cx="205.4" cy="414" r=".6"/><circle cx="214" cy="414" r=".6"/></g>
<circle cx="191.8" cy="223.5" r="2.2" fill="#a9a9b0"/><circle cx="191.8" cy="223.5" r=".9" fill="#2a2a2a"/><circle cx="191.7" cy="248.6" r="2.2" fill="#a9a9b0"/><circle cx="191.7" cy="248.6" r=".9" fill="#2a2a2a"/><circle cx="196.2" cy="274.2" r="2.2" fill="#a9a9b0"/><circle cx="196.2" cy="274.2" r=".9" fill="#2a2a2a"/><circle cx="196.2" cy="299.3" r="2.3" fill="#fff"/><circle cx="196.2" cy="299.3" r=".8" fill="#999"/>
<circle cx="203.2" cy="357.5" r="2.5" fill="#a0978a"/><circle cx="203.2" cy="357.5" r="1.1" fill="#2a2420"/><circle cx="203.2" cy="382.2" r="2.5" fill="#a0978a"/><circle cx="203.2" cy="382.2" r="1.1" fill="#2a2420"/><circle cx="196.7" cy="422.8" r="2.5" fill="#a0978a"/><circle cx="196.7" cy="422.8" r="1.1" fill="#2a2420"/><circle cx="204.8" cy="422.8" r="2.5" fill="#a0978a"/><circle cx="204.8" cy="422.8" r="1.1" fill="#2a2420"/><circle cx="212.8" cy="422.8" r="2.5" fill="#a0978a"/><circle cx="212.8" cy="422.8" r="1.1" fill="#2a2420"/><circle cx="220.8" cy="422.8" r="2.5" fill="#a0978a"/><circle cx="220.8" cy="422.8" r="1.1" fill="#2a2420"/>
<path d="M184 415.2H229.3" stroke="#111" stroke-width="1"/>
<text x="199.2" y="353.2" font-size="4.6" fill="#8a760c">1R</text>
</svg>

<!-- RIGHT PANEL -->
<div class="a" style="left:531px;top:88px;width:4px;height:413px;background:linear-gradient(90deg,#efefef,#e0e0e0)"></div>
<div class="a" style="left:535px;top:88px;width:114px;height:412.500px;background:#dedede;border-radius:0 0 6px 0;box-shadow:0 .5px 0 .5px #c4c4c4"></div>
<div class="a" style="left:533px;top:88.500px;width:118px;height:17.500px;background:#dcdcdc"></div>
<div class="a" style="left:533.5px;top:106px;width:118px;height:16px;background:#ececec"></div>
<div class="a" style="left:535px;top:122px;width:116px;height:241.600px;background:#fff"></div>
<div class="a" style="left:645.500px;top:122px;width:4.500px;height:241.600px;background:#f6f6f6"></div>
<div class="t" style="left:541.400px;top:95px;font-size:6.75px;color:#555">Selected objects</div><div class="t" style="left:603.500px;top:95px;font-size:6.75px;color:#555">1</div>
<svg style="left:541.500px;top:112px" width="4" height="4" viewBox="0 0 4 4"><path d="M4 0V4H0Z" fill="#aaa"/></svg>
<div class="t" style="left:546.600px;top:110.600px;font-size:8.050px;color:#444">Surface properties</div>
<div class="t" style="left:541.400px;top:128.5px;font-size:6.75px;color:#707070">Layer</div><div class="a" style="left:594.400px;top:125.6px;width:47.600px;height:13.600px;background:#fff;border:1px solid #e4e4e4;border-radius:1.500px"></div><div class="t" style="left:599.500px;top:128.6px;font-size:8px;color:#444;width:31px;overflow:hidden">Multi-laye</div><svg style="left:634px;top:131.2px" width="6" height="4" viewBox="0 0 6 4"><path d="M.6 .6 L3 3.200 L5.400 .6" fill="none" stroke="#222" stroke-width="1.100"/></svg>
<div class="t" style="left:541.400px;top:145.6px;font-size:6.75px;color:#707070">Number</div><div class="a" style="left:594.400px;top:142.7px;width:47.600px;height:13.600px;background:#dcdcdc;border-radius:1px"></div><div class="t" style="left:598px;top:147.1px;font-size:6.75px;color:#8a8a8a">2</div>
<div class="t" style="left:541.400px;top:162.7px;font-size:6.75px;color:#707070">Shape</div><div class="a" style="left:594.400px;top:159.8px;width:47.600px;height:13.600px;background:#fff;border:1px solid #e4e4e4;border-radius:1.500px"></div><div class="t" style="left:599.500px;top:162.8px;font-size:8px;color:#444;width:31px;overflow:hidden">Round</div><svg style="left:634px;top:165.4px" width="6" height="4" viewBox="0 0 6 4"><path d="M.6 .6 L3 3.200 L5.400 .6" fill="none" stroke="#222" stroke-width="1.100"/></svg>
<div class="t" style="left:541.400px;top:179.9px;font-size:6.75px;color:#707070">Connect</div><div class="a" style="left:594.400px;top:177.0px;width:47.600px;height:13.600px;background:#fff;border:1px solid #e4e4e4;border-radius:1.500px"></div><div class="t" style="left:598px;top:181.4px;font-size:6.75px;color:#555">S$1190</div>
<div class="t" style="left:541.400px;top:197.0px;font-size:6.75px;color:#707070">Width</div><div class="a" style="left:594.400px;top:194.1px;width:47.600px;height:13.600px;background:#fff;border:1px solid #e4e4e4;border-radius:1.500px"></div><div class="t" style="left:598px;top:198.5px;font-size:6.75px;color:#555">1.524mm</div>
<div class="t" style="left:541.400px;top:214.1px;font-size:6.75px;color:#707070">Height</div><div class="a" style="left:594.400px;top:211.2px;width:47.600px;height:13.600px;background:#fff;border:1px solid #e4e4e4;border-radius:1.500px"></div><div class="t" style="left:598px;top:215.6px;font-size:6.75px;color:#555">1.524mm</div>
<div class="t" style="left:541.400px;top:231.2px;font-size:6.75px;color:#707070">Rotation</div><div class="a" style="left:594.400px;top:228.3px;width:47.600px;height:13.600px;background:#fff;border:1px solid #e4e4e4;border-radius:1.500px"></div><div class="t" style="left:598px;top:232.7px;font-size:6.75px;color:#555">0</div>
<div class="t" style="left:541.400px;top:248.3px;font-size:6.75px;color:#707070">Hole shape</div><div class="a" style="left:594.400px;top:245.4px;width:47.600px;height:13.600px;background:#fff;border:1px solid #e4e4e4;border-radius:1.500px"></div><div class="t" style="left:599.500px;top:248.4px;font-size:8px;color:#444;width:31px;overflow:hidden">Round</div><svg style="left:634px;top:251.0px" width="6" height="4" viewBox="0 0 6 4"><path d="M.6 .6 L3 3.200 L5.400 .6" fill="none" stroke="#222" stroke-width="1.100"/></svg>
<div class="t" style="left:541.400px;top:265.5px;font-size:6.75px;color:#707070">Hole (D)</div><div class="a" style="left:594.400px;top:262.6px;width:47.600px;height:13.600px;background:#fff;border:1px solid #e4e4e4;border-radius:1.500px"></div><div class="t" style="left:598px;top:267.0px;font-size:6.75px;color:#555">0.711mm</div>
<div class="t" style="left:541.400px;top:282.6px;font-size:6.75px;color:#707070">Clad</div><div class="a" style="left:594.400px;top:279.7px;width:47.600px;height:13.600px;background:#fff;border:1px solid #e4e4e4;border-radius:1.500px"></div><div class="t" style="left:599.500px;top:282.7px;font-size:8px;color:#444;width:31px;overflow:hidden">Yes</div><svg style="left:634px;top:285.3px" width="6" height="4" viewBox="0 0 6 4"><path d="M.6 .6 L3 3.200 L5.400 .6" fill="none" stroke="#222" stroke-width="1.100"/></svg>
<div class="t" style="left:541.400px;top:299.7px;font-size:6.75px;color:#707070">Center X</div><div class="a" style="left:594.400px;top:296.8px;width:47.600px;height:13.600px;background:#fff;border:1px solid #e4e4e4;border-radius:1.500px"></div><div class="t" style="left:598px;top:301.2px;font-size:6.75px;color:#555">48.641mm</div>
<div class="t" style="left:541.400px;top:316.8px;font-size:6.75px;color:#707070">Center Y</div><div class="a" style="left:594.400px;top:313.9px;width:47.600px;height:13.600px;background:#fff;border:1px solid #e4e4e4;border-radius:1.500px"></div><div class="t" style="left:598px;top:318.3px;font-size:6.75px;color:#555">53.912mm</div>
<div class="t" style="left:541.400px;top:333.9px;font-size:6.75px;color:#707070">Solder mask …</div><div class="a" style="left:594.400px;top:331.0px;width:47.600px;height:13.600px;background:#fff;border:1px solid #e4e4e4;border-radius:1.500px"></div><div class="t" style="left:598px;top:335.4px;font-size:6.75px;color:#555">0.102mm</div>
<div class="t" style="left:541.400px;top:351.1px;font-size:6.75px;color:#707070">ID</div><div class="a" style="left:594.400px;top:348.2px;width:47.600px;height:13.600px;background:#dcdcdc;border-radius:1px"></div><div class="t" style="left:598px;top:352.6px;font-size:6.75px;color:#8a8a8a">gge1533</div>
<div class="a" style="left:535px;top:369.600px;width:116px;height:54.600px;background:#ececec;border-top:1px solid #d4d4d4;border-bottom:1px solid #d4d4d4"></div>
<div class="t" style="left:541.400px;top:374.1px;font-size:6.75px;color:#555">Mouse X</div><div class="t" style="left:595px;top:374.1px;font-size:6.75px;color:#555">3.175mm</div>
<div class="a" style="left:535px;top:383.2px;width:116px;height:1px;background:#dedede"></div><div class="t" style="left:541.400px;top:387.7px;font-size:6.75px;color:#555">Mouse Y</div><div class="t" style="left:595px;top:387.7px;font-size:6.75px;color:#555">103.378mm</div>
<div class="a" style="left:535px;top:396.8px;width:116px;height:1px;background:#dedede"></div><div class="t" style="left:541.400px;top:401.3px;font-size:6.75px;color:#555">DX Mouse</div><div class="t" style="left:595px;top:401.3px;font-size:6.75px;color:#555">-45.720mm</div>
<div class="a" style="left:535px;top:410.4px;width:116px;height:1px;background:#dedede"></div><div class="t" style="left:541.400px;top:414.9px;font-size:6.75px;color:#555">Mouse DY</div><div class="t" style="left:595px;top:414.9px;font-size:6.75px;color:#555">48.804mm</div>
<div class="a" style="left:591.500px;top:369.600px;width:1px;height:54.600px;background:#d4d4d4"></div>
<div class="a" style="left:532.2px;top:280.3px;width:3.2px;height:29px;background:#f6f6f6;border:.6px solid #b4b4b4;border-radius:1.2px"></div>
<svg style="left:532.8px;top:292px" width="2.4" height="5" viewBox="0 0 2.4 5"><path d="M0 0L2.4 2.5L0 5Z" fill="#333"/></svg>

<!-- LAYERS PANEL -->
<div class="a" style="left:386px;top:111px;width:141px;height:75.500px;background:#fff;border:1px solid #dadada;border-radius:2px"></div>
<div class="a" style="left:387px;top:112px;width:139px;height:12.500px;background:#ececec"></div>
<div class="a" style="left:387px;top:124.500px;width:139px;height:14.300px;background:#e2e2e2"></div>
<div class="a" style="left:387px;top:124.500px;width:38px;height:14.300px;background:#fff"></div>
<div class="t" style="left:389.600px;top:115.400px;font-size:6.900px;color:#555">Layers and objects</div>
<svg style="left:494px;top:113px" width="32" height="10" viewBox="0 0 32 10"><path d="M5.200 1 L8.600 4.400 L7.400 4.800 L6.400 5.800 L6.200 7.600 L2.200 3.600 L4 3.400 L5 2.400 Z" fill="#333"/><path d="M4 5.800 L1.600 8.200" stroke="#333" stroke-width=".9"/><circle cx="16.400" cy="5" r="2.900" fill="none" stroke="#444" stroke-width="1.100"/><circle cx="16.400" cy="5" r="1" fill="none" stroke="#444" stroke-width=".7"/><path d="M16.400 1.200V2 M16.400 8V8.800 M12.600 5H13.400 M19.400 5H20.200 M13.700 2.300L14.300 2.900 M18.500 7.100L19.100 7.700 M13.700 7.700L14.300 7.100 M18.500 2.900L19.100 2.300" stroke="#444" stroke-width="1"/><path d="M24.400 5H30" stroke="#555" stroke-width="1"/></svg>
<div class="t" style="left:393px;top:129.100px;font-size:6.650px;font-weight:bold;color:#3b5f9a">All.layer</div>
<div class="t" style="left:431px;top:129.100px;font-size:6.800px;color:#555">Copper layer</div>
<div class="t" style="left:482px;top:129.100px;font-size:6.800px;color:#555;width:44px;overflow:hidden">Copperless layer</div>
<div class="a" style="left:405px;top:154.600px;width:120px;height:27.200px;background:#dedede"></div>
<div class="a" style="left:387px;top:140.600px;width:18px;height:14px;background:#fa0808"></div>
<div class="a" style="left:387px;top:154.600px;width:18px;height:13.600px;background:#0606f8"></div>
<div class="a" style="left:387px;top:168.200px;width:18px;height:13.600px;background:#fecb04"></div>
<svg style="left:391px;top:142px" width="10" height="10" viewBox="0 0 10 10"><path d="M1.200 8.800 L1.800 6.400 L6.800 1.400 L8.600 3.200 L3.600 8.200 Z" fill="#fcb84a"/><path d="M1.200 8.800 L1.800 6.400 L3.600 8.200Z" fill="#fff"/></svg>
<svg style="left:409.500px;top:143.8px" width="9" height="7" viewBox="0 0 9 7"><path d="M.5 3.500 Q4.500 -.6 8.500 3.500 Q4.500 7.600 .5 3.500Z" fill="#fff" stroke="#333" stroke-width=".9"/><circle cx="4.500" cy="3.500" r="1.500" fill="#333"/></svg><div class="t" style="left:423.500px;top:145.8px;font-size:6.780px;color:#555">Top layer</div>
<svg style="left:409.500px;top:157.6px" width="9" height="7" viewBox="0 0 9 7"><path d="M.5 3.500 Q4.500 -.6 8.500 3.500 Q4.500 7.600 .5 3.500Z" fill="#fff" stroke="#333" stroke-width=".9"/><circle cx="4.500" cy="3.500" r="1.500" fill="#333"/></svg><div class="t" style="left:423.500px;top:159.5px;font-size:6.780px;color:#555">Bottom layer</div>
<svg style="left:409.500px;top:171.8px" width="9" height="7" viewBox="0 0 9 7"><path d="M.5 3.500 Q4.500 -.6 8.500 3.500 Q4.500 7.600 .5 3.500Z" fill="#fff" stroke="#333" stroke-width=".9"/><circle cx="4.500" cy="3.500" r="1.500" fill="#333"/></svg><div class="t" style="left:423.500px;top:173px;font-size:6.780px;color:#555">Top layer of printing</div>
<svg style="left:519px;top:178px" width="7" height="7" viewBox="0 0 7 7"><path d="M6.500 .5L.5 6.500 M6.500 2.500L2.500 6.500 M6.500 4.500L4.500 6.500" stroke="#999" stroke-width=".7"/></svg>
<!-- PCB TOOLS -->
<div class="a" style="left:388px;top:192px;width:136px;height:69px;background:#fff;border:1px solid #dadada;border-radius:2px"></div>
<div class="a" style="left:389px;top:193px;width:134px;height:13.500px;background:#ececec;border-bottom:1px solid #e2e2e2"></div>
<div class="t" style="left:392px;top:197.100px;font-size:6.760px;color:#555">PCB Tools</div>
<div class="a" style="left:514px;top:199px;width:6px;height:1px;background:#555"></div>
<svg style="left:388px;top:192px" width="136" height="69" viewBox="0 0 136 69" fill="none" stroke="#333" stroke-width=".9">
<g transform="translate(11.6,26.9)"><path d="M-3.400 -3.400 H-.6 V3.400 H3"/><circle cx="-4" cy="-3.400" r=".9"/><circle cx="3.800" cy="3.400" r=".9"/></g>
<g transform="translate(27.8,26.9)"><circle r="3.300" stroke="#111" stroke-width="1.800"/></g>
<g transform="translate(43.4,26.9)"><circle cx="-1.400" cy="-1.600" r="2.300" stroke-width="1.100"/><path d="M.9 -1.600H4.400 M-1.400 .7V4.600" stroke-width="1.100"/></g>
<g transform="translate(59.5,26.9)"><path d="M-3.800 -4 H3.800 V-2 H1.100 V3 H2 V4.200 H-2 V3 H-1.100 V-2 H-3.800 Z" stroke-width=".8"/></g>
<g transform="translate(75.5,26.9)"><path d="M0 0 H4.200 A4.200 4.200 0 1 0 0 4.200 Z" stroke="#666" stroke-width=".8"/></g>
<g transform="translate(91.5,26.9)"><path d="M0 0 V4.200 A4.200 4.200 0 1 1 4.200 0" stroke="#666" stroke-width=".8"/><path d="M0 0V4.200" stroke="#666" stroke-width=".8"/></g>
<g transform="translate(107.6,26.9)"><circle r="4.400" stroke="#555" stroke-width=".8"/></g>
<g transform="translate(123.8,26.9)"><path d="M-3.600 .6 L-2.200 3.600 Q-1.400 4.800 .6 4.800 H1.600 Q3.600 4.800 3.800 2.600 V-1.800 M-3.600 .6 Q-4.200 -.8 -3 -.6 L-1.800 1 V-3.400 M-1.800 -3.400 Q-1.200 -4.400 -.6 -3.400 V0 M-.6 -4 Q0 -5 .700 -4 V0 M.7 -3.400 Q1.400 -4.400 2.100 -3.400 V0 M2.100 -2.200 Q3 -3 3.800 -1.800" stroke-width=".7"/></g>
<g transform="translate(11.6,42.6)"><circle r="2.600" stroke-width=".8"/><path d="M-4.400 -4.400 L-1.800 -1.800 M4.400 -4.400 L1.800 -1.800 M-4.400 4.400 L-1.800 1.800 M4.400 4.400 L1.800 1.800" stroke-width=".9"/></g>
<g transform="translate(27.8,42.6)"><rect x="-4.600" y="-3.800" width="9.200" height="7.600" rx=".6" stroke-width=".9"/><path d="M-4.400 2.400 L-1.600 -.4 L.8 2 L2.200 .8 L4.400 2.600" stroke-width=".7"/><circle cx="1.800" cy="-1.600" r=".8" stroke-width=".6"/></g>
<g transform="translate(43.4,42.6)"><path d="M-3.400 3.800 V-3.600 H3.800" stroke-width="1.100"/><circle cx="-3.400" cy="4" r=".9" fill="#333" stroke="none"/><circle cx="4" cy="-3.600" r=".9" fill="#333" stroke="none"/></g>
<g transform="translate(59.5,42.6)"><path d="M4.400 -4 L-4.400 3.800 H4.400" stroke-width=".9"/><path d="M-.8 3.800 A3.600 3.600 0 0 0 -1.800 1.500" stroke-width=".7"/></g>
<g transform="translate(75.5,42.6)"><path d="M-3.600 -3.400 L3.600 3.400" stroke="#666" stroke-width=".8"/><circle cx="-4" cy="-3.800" r=".9" stroke="#555" stroke-width=".7"/><circle cx="4" cy="3.800" r=".9" stroke="#555" stroke-width=".7"/></g>
<g transform="translate(91.5,42.6)"><path d="M-4.400 4 V-.6 H-1.200 V-4 H4.400 V4 Z" stroke="#555" stroke-width=".8" stroke-dasharray="1.400 .9"/></g>
<g transform="translate(107.6,42.6)"><path d="M-4.400 4 V-.6 H-1.200 V-4 H4.400 V4 Z" stroke-width=".9"/></g>
<g transform="translate(123.8,42.6)"><path d="M-4.200 4.200 L4.200 -4.200" stroke-width=".8"/><path d="M-3.400 .6 L-.6 3.400 M.6 -3.400 L3.400 -.6" stroke-width=".9"/><path d="M-1.200 -.2 L.2 1.200 M-.2 -1.200 L1.200 .2" stroke-width=".6"/></g>
<g transform="translate(11.6,58.6)"><rect x="-4.400" y="-4.400" width="8.800" height="8.800" rx=".6" stroke="#444" stroke-width=".9"/></g>
<g transform="translate(27.8,58.6)"><path d="M-3 -3 L3 3 M3 -3 L-3 3" stroke-width=".8"/><rect x="-1.600" y="-1.600" width="3.200" height="3.200" stroke-width=".7" fill="#fff"/><g fill="#333" stroke="none"><rect x="-4.600" y="-4.600" width="2" height="2"/><rect x="2.600" y="-4.600" width="2" height="2"/><rect x="-4.600" y="2.600" width="2" height="2"/><rect x="2.600" y="2.600" width="2" height="2"/></g></g>
<g transform="translate(43.4,58.6)"><rect x="-5" y="-4" width="10" height="8" rx=".6" stroke-width=".9"/><rect x="0" y=".2" width="4" height="2.800" fill="#555" stroke="none"/><path d="M0 1.600H4 M2 .2V3" stroke="#fff" stroke-width=".4"/></g>
</svg>
<div class="a" style="left:0;top:500px;width:640px;height:1px;background:#bdbdbd"></div>
<div class="a" style="left:648.700px;top:0;width:1.300px;height:494px;background:#d4d7dc"></div>
<div class="a" style="left:0;top:0;width:650px;height:1px;background:#bcc8dc"></div>
<div class="a" style="left:0;top:0;width:1px;height:501px;background:#dfe3ea;opacity:.8"></div>
</div>
</body></html>
